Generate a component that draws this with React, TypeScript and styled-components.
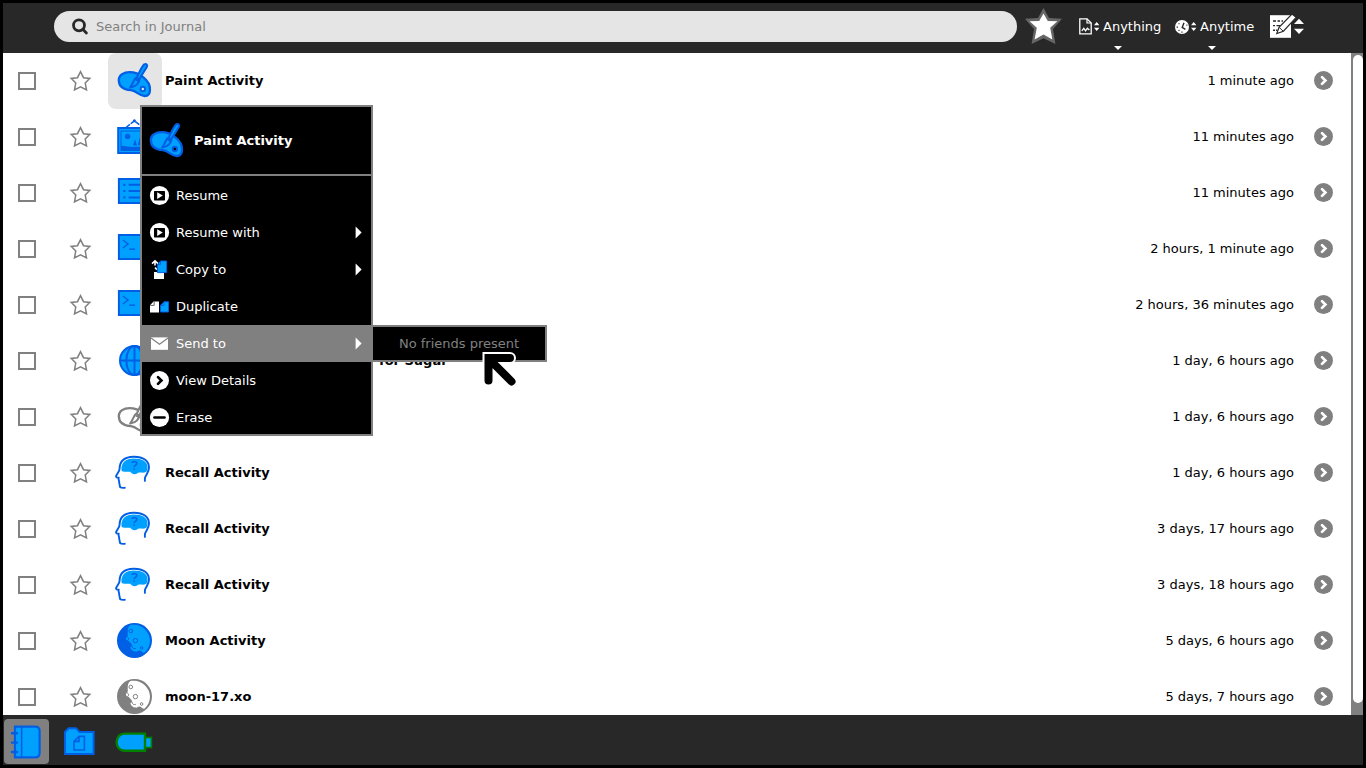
import React from 'react';
import styled, { createGlobalStyle, css } from 'styled-components';

const FILL = '#00a0ff';
const STROKE = '#005fe4';
const GREY = '#808080';

const Global = createGlobalStyle`
  * { box-sizing: border-box; }
  body { margin: 0; background: #000; overflow: hidden; }
  body, button, input { font-family: "DejaVu Sans", Verdana, sans-serif; font-size: 13px; line-height: 16px; }
  button { margin: 0; padding: 0; border: 0; background: none; color: inherit; cursor: pointer; }
  svg { display: block; flex: none; overflow: visible; }
`;

const Screen = styled.div`
  position: relative;
  display: flex;
  flex-direction: column;
  height: 100vh;
  border: 3px solid #000;
`;

/* ---------- top toolbar ---------- */

const Toolbar = styled.header`
  display: flex;
  align-items: center;
  flex: none;
  height: 50px;
  padding: 0 59px 3px 51px;
  background: #282828;
  color: #fff;
`;

const SearchField = styled.label`
  display: flex;
  align-items: center;
  flex: 1;
  min-width: 0;
  height: 31px;
  padding: 0 18px;
  gap: 8px;
  border-radius: 16px;
  background: #e5e5e5;
`;

const SearchInput = styled.input`
  flex: 1;
  min-width: 0;
  padding: 0;
  border: 0;
  outline: 0;
  background: none;
  color: #000;
  &::placeholder { color: ${GREY}; opacity: 1; }
`;

const FavouriteFilter = styled.button`
  margin: 0 17px 0 8px;
`;

const FilterButton = styled.button<{ $width: number }>`
  position: relative;
  display: flex;
  align-items: center;
  width: ${p => p.$width}px;
  height: 47px;
  margin-right: 16px;
  gap: 2px;
  white-space: nowrap;
  &::after {
    content: '';
    position: absolute;
    left: 50%;
    bottom: 0;
    margin-left: -5px;
    border: 4px solid transparent;
    border-top-color: #fff;
    border-bottom: 0;
  }
`;

const FilterText = styled.span`
  padding-left: 1px;
`;

const SortButton = styled.button`
  margin-left: 3px;
`;

/* ---------- journal list ---------- */

const Journal = styled.main`
  display: flex;
  flex: 1;
  min-height: 0;
  background: #fff;
`;

const Entries = styled.ul`
  flex: 1;
  min-width: 0;
  margin: 0;
  padding: 0;
  list-style: none;
  overflow: hidden;
`;

const Entry = styled.li`
  display: flex;
  align-items: center;
  height: 56px;
  padding: 0 17px 0 15px;
`;

const Tick = styled.input`
  appearance: none;
  flex: none;
  width: 18px;
  height: 18px;
  margin: 0 33px 0 0;
  border: 2px solid ${GREY};
  background: #fff;
  &:checked { background: ${GREY}; }
`;

const ActivityButton = styled.button<{ $active: boolean }>`
  display: flex;
  align-items: center;
  flex: none;
  width: 54px;
  height: 56px;
  margin: 0 3px 0 17px;
  padding-left: 9px;
  border-radius: 8px;
  background: ${p => (p.$active ? '#e5e5e5' : 'none')};
`;

const Title = styled.span`
  flex: 1;
  min-width: 0;
  font-weight: 700;
  white-space: nowrap;
`;

const When = styled.time`
  margin-right: 20px;
  white-space: nowrap;
`;

const Scrollbar = styled.div`
  flex: none;
  width: 12px;
  padding: 2px 0 12px 2px;
  background: ${GREY};
`;

const Thumb = styled.div`
  height: 100%;
  border-radius: 5px;
  background: #fff;
`;

/* ---------- bottom volumes bar ---------- */

const VolumesBar = styled.footer`
  display: flex;
  align-items: center;
  flex: none;
  height: 50px;
  padding: 3px 1px 0;
  gap: 8px;
  background: #282828;
`;

const VolumeButton = styled.button<{ $active?: boolean }>`
  display: flex;
  align-items: center;
  justify-content: center;
  width: 45px;
  height: 45px;
  border-radius: 4px;
  ${p => p.$active && css`background: ${GREY};`}
`;

/* ---------- palette menu ---------- */

const Palette = styled.div`
  position: absolute;
  left: 137px;
  top: 102px;
  width: 233px;
  border: 2px solid ${GREY};
  background: #000;
  color: #fff;
`;

const PaletteHeader = styled.div`
  display: flex;
  align-items: center;
  height: 69px;
  padding-left: 7px;
  gap: 9px;
  border-bottom: 2px solid ${GREY};
  font-weight: 700;
`;

const PaletteItems = styled.ul`
  margin: 0 0 -2px;
  padding: 1px 0 0;
  list-style: none;
`;

const PaletteRow = styled.li`
  position: relative;
`;

const PaletteItem = styled.button<{ $active?: boolean }>`
  display: flex;
  align-items: center;
  width: 100%;
  height: 37px;
  padding: 0 9px 0 8px;
  gap: 6px;
  text-align: left;
  background: ${p => (p.$active ? GREY : 'none')};
`;

const ItemText = styled.span`
  flex: 1;
`;

const SubPalette = styled.div`
  position: absolute;
  left: 100%;
  top: 0;
  width: 176px;
  border: 2px solid ${GREY};
  background: #000;
  color: ${GREY};
  line-height: 33px;
  text-align: center;
  white-space: nowrap;
`;

const Pointer = styled.svg`
  position: absolute;
  left: 479px;
  top: 348px;
  pointer-events: none;
`;

/* ---------- drawings ---------- */

type Tint = { fill?: string; stroke?: string; hole?: string };

const StarOutline = () => (
  <svg width="22" height="22" viewBox="0 0 22 22">
    <path d="M11.5 1.6 L14.5 7.7 L20.8 8.4 L16.2 12.9 L17.5 19.9 L11.5 16.8 L5.5 19.9 L6.8 12.9 L2.2 8.4 L8.5 7.7 Z" fill="#fff" stroke={GREY} strokeWidth="1.5" />
  </svg>
);

const BigStar = () => (
  <svg width="37" height="37" viewBox="0 0 37 37">
    <path d="M18.5 0 L24 10 L37 10.8 L28 21 L30.4 36 L18.5 30.2 L6.6 36 L9 21 L0 10.8 L13 10 Z" fill="#666" />
    <path d="M18.5 5.4 L22.8 13 L32.4 13.2 L25.2 19.8 L27.4 31.6 L18.5 26.4 L9.6 31.6 L11.8 19.8 L4.6 13.2 L14.2 13 Z" fill="#fff" />
  </svg>
);

const Magnifier = () => (
  <svg width="16" height="17" viewBox="0 0 16 17">
    <circle cx="7" cy="7.3" r="5.5" fill="none" stroke="#282828" strokeWidth="2.8" />
    <path d="M10.8 11.3 L14.4 15" stroke="#282828" strokeWidth="2.8" strokeLinecap="round" />
  </svg>
);

const UpDown = () => (
  <svg width="6" height="9" viewBox="0 0 6 9">
    <path d="M0 3.2 L2.7 0 L5.4 3.2 Z M0 5.8 L2.7 9 L5.4 5.8 Z" fill="#fff" />
  </svg>
);

const DocIcon = () => (
  <svg width="13" height="17" viewBox="0 0 13 17">
    <path d="M0.8 0.8 H8 L12.2 5 V15.8 H0.8 Z" fill="none" stroke="#fff" strokeWidth="1.3" />
    <path d="M8 0.8 V5 H12.2" fill="none" stroke="#fff" strokeWidth="1.2" />
    <path d="M2.8 12.8 L4.8 10.4 L6.6 12.8 L8.4 10.2 L10.4 12" fill="none" stroke="#fff" strokeWidth="1.3" />
  </svg>
);

const ClockIcon = () => (
  <svg width="14" height="14" viewBox="0 0 14 14">
    <circle cx="7" cy="7" r="7" fill="#fff" />
    <g stroke="#282828" fill="none" strokeWidth="1.4">
      <path d="M9 2.8 L7.2 7.4 L10.4 9.4" />
      <path d="M1.6 7.2 H3 M3.6 3.4 L4.4 4.2 M3.6 10.8 L4.4 10 M7 11.6 V12.8 M11.4 5.2 H12.4" strokeWidth="1.2" />
    </g>
  </svg>
);

const EditSort = () => (
  <svg width="34" height="25" viewBox="0 0 34 25">
    <rect x="0" y="1.2" width="21" height="22.6" fill="#fff" />
    <path d="M3 7 H6 M7.5 7 H10 M11.5 7 H13 M3 11.6 H5 M6.5 11.6 H10 M3 16.2 H5 M6 16.2 H7.4" stroke="#282828" strokeWidth="1.4" />
    <path d="M22 0 L26.2 3.4 L13.4 17.2 L6.8 19.6 L9 13.4 Z" fill="#fff" stroke="#282828" strokeWidth="1.2" />
    <path d="M9.4 13.6 L13 17" stroke="#282828" strokeWidth="1" />
    <path d="M24 10 L29 4.8 L34 10 Z M24 14.8 L29 20 L34 14.8 Z" fill="#fff" />
  </svg>
);

const PaintIcon = ({ fill = FILL, stroke = STROKE, hole = '#fff' }: Tint) => (
  <svg width="36" height="36" viewBox="0 0 36 36">
    <path d="M1.8 17 C1.8 11.8 7 9.2 12.5 9.2 C22 9.2 33.2 17 33 26.5 C33 31 30.8 33 27.6 33 C22.5 33 20 28 14 27.2 C6 26.6 1.8 23 1.8 17 Z" fill={fill} stroke={stroke} strokeWidth="2.3" />
    <circle cx="25.8" cy="26" r="2.2" fill={hole} stroke={stroke} strokeWidth="2" />
    <path d="M22.8 15.2 L29.8 4 C30.8 1.6 29.2 0.4 27.2 1.4 C25 3 21.6 11 20 14.2 C17 15.4 16.2 20.6 13.2 24.4 C17.4 24 22 21.6 22.8 15.2 Z" fill={fill} stroke={stroke} strokeWidth="2.1" strokeLinejoin="round" />
    <path d="M20.2 14.2 L22.8 15.4 L21.6 19 L18.6 17.4 Z" fill={stroke} />
  </svg>
);

const PictureIcon = () => (
  <svg width="36" height="36" viewBox="0 0 36 36">
    <path d="M9 8.5 L17.4 1.8 L25.8 8.5" fill="none" stroke={STROKE} strokeWidth="1.5" strokeDasharray="5 1" />
    <circle cx="17.4" cy="1.8" r="1.5" fill={STROKE} />
    <rect x="1.2" y="9" width="33" height="25" fill={FILL} stroke={STROKE} strokeWidth="2" />
    <rect x="4" y="12" width="27.4" height="19.4" fill={FILL} stroke={STROKE} strokeWidth="1" />
    <circle cx="10.6" cy="17.4" r="2.7" fill={STROKE} />
    <path d="M4 26.5 C12 28.5 22 28.5 31.4 26 V31.4 H4 Z M18 20 L20 26.4 H16 Z M23 18 L25.4 26 H20.8 Z" fill={STROKE} />
  </svg>
);

const ListIcon = () => (
  <svg width="36" height="36" viewBox="0 0 36 36">
    <rect x="1.9" y="4" width="32" height="24" fill={FILL} stroke={STROKE} strokeWidth="2" />
    <path d="M11.6 9.8 H29 M11.6 16 H29 M11.6 22.4 H29" stroke={STROKE} strokeWidth="2" />
    <path d="M6.2 9.8 H8.4 M6.2 16 H8.4 M6.2 22.4 H8.4" stroke={STROKE} strokeWidth="2.2" />
  </svg>
);

const TerminalIcon = () => (
  <svg width="36" height="36" viewBox="0 0 36 36">
    <rect x="1.9" y="4" width="32" height="24" fill={FILL} stroke={STROKE} strokeWidth="2" />
    <path d="M6 9 L11 13 L6 17" fill="none" stroke={STROKE} strokeWidth="1.5" />
    <path d="M12.2 18.2 H18" stroke={STROKE} strokeWidth="1.5" />
  </svg>
);

const GlobeIcon = () => (
  <svg width="36" height="36" viewBox="0 0 36 36">
    <g fill="none" stroke={STROKE} strokeWidth="2">
      <circle cx="17.5" cy="17.5" r="14.5" fill={FILL} />
      <ellipse cx="17.5" cy="17.5" rx="8.2" ry="14.5" />
      <path d="M17.5 3 V32 M3 17.5 H32" />
    </g>
  </svg>
);

const HeadIcon = () => (
  <svg width="36" height="36" viewBox="0 0 36 36">
    <path d="M4.4 13 C5 6 10 3.4 17 3.4 C25 3.4 31 6.4 30.6 13 C30.4 16 29.4 17 27.6 17.6 C25 18 22 17 20.4 18.2 C18.4 20 14.6 19.4 13.4 16.8 C10.6 16.8 7 17 4.6 16 Z" fill={FILL} />
    <path d="M8.6 32.6 C5.6 33 3 32.8 2.8 31.4 C3.2 29.6 1.8 28.8 2.2 26.8 C1.8 25.4 1.4 24.4 1.6 22.8 C-0.2 22.6 -1.4 22 -0.8 20.6 C0.6 17.8 2.6 16.2 2.6 13.8 C2.6 8 5 2.2 16.6 1.8 C26.2 1.6 32 5.8 32 12.8 C32 17 29 19.6 28 22.6 C27.8 24.4 27.8 25.4 28 26.6" fill="none" stroke={STROKE} strokeWidth="1.9" />
    <path d="M15 8 C15.6 6.2 20 6 19.8 8.4 C19.6 10.2 17.4 10 17.2 12.2 M17.1 13.6 V15" fill="none" stroke={STROKE} strokeWidth="1.5" />
  </svg>
);

const MoonIcon = ({ fill = FILL, stroke = STROKE }: Tint) => (
  <svg width="36" height="36" viewBox="0 0 36 36">
    <circle cx="17.5" cy="17.5" r="17.5" fill={stroke} />
    <path d="M13 2.2 C23 -0.4 33 8 33 17.5 C33 22.4 31 26.6 27.6 29.4 C25.4 30.4 25 28 22.6 27.6 C20.6 27.2 20.6 29.2 18.6 28.6 C15.6 28.4 13.6 26.4 13.4 24 C15 24 15.4 22.4 14.4 20.8 C12.6 19.4 12.8 18 10.6 17.4 C8.4 17 8.6 13.6 10.6 13.2 C11.4 10.6 9.4 5.4 13 2.2 Z" fill={fill} />
    <g fill="none" stroke={stroke} strokeWidth="1">
      <circle cx="13.8" cy="8" r="1.8" />
      <circle cx="18.4" cy="17.6" r="2.2" />
      <circle cx="24.6" cy="25" r="1.3" />
      <path d="M9.6 14 C12 14 12.4 17 10.4 17.4 M15.2 22.8 C15 25.6 17.4 26.2 19 25.2" />
    </g>
  </svg>
);

const GoIcon = ({ bg = GREY, fg = '#fff' }: { bg?: string; fg?: string }) => (
  <svg width="20" height="20" viewBox="0 0 20 20">
    <circle cx="9.5" cy="9.5" r="9.5" fill={bg} />
    <path d="M8 6.1 L11.4 9.5 L8 12.9" fill="none" stroke={fg} strokeWidth="2.7" strokeLinecap="round" />
  </svg>
);

const ResumeIcon = () => (
  <svg width="20" height="20" viewBox="0 0 20 20">
    <circle cx="9.5" cy="9.5" r="9.6" fill="#fff" />
    <rect x="4" y="5" width="11" height="9.4" rx="0.6" fill="#000" />
    <path d="M7.2 6.2 L12.8 9.6 L7.2 13 Z" fill="#fff" />
  </svg>
);

const CopyIcon = () => (
  <svg width="20" height="20" viewBox="0 0 20 20">
    <path d="M4 12 H14 V19 H4 Z" fill="#fff" />
    <path d="M2 3.6 L5 0.8 L8 3.6 M5 1.2 V5.6 M5 7.6 L7 9.6" fill="none" stroke="#fff" strokeWidth="1.6" />
    <path d="M10.6 1 H16.6 V12.6 H7.4 V4.6 Z" fill={FILL} stroke={STROKE} strokeWidth="1" />
    <path d="M10.6 1 V4.6 H7.4" fill="none" stroke={STROKE} strokeWidth="1" />
  </svg>
);

const DuplicateIcon = () => (
  <svg width="20" height="20" viewBox="0 0 20 20">
    <path d="M3.6 4.4 H9 V15.4 H0 V8.2 Z" fill="#fff" />
    <path d="M4.2 4.4 V8.4 H0.4" fill="none" stroke="#666" strokeWidth="1" />
    <path d="M14 4.8 H18.5 V15 H10.5 V8.4 Z" fill={FILL} stroke={STROKE} strokeWidth="1" />
    <path d="M14 4.8 V8.4 H10.5" fill="none" stroke={STROKE} strokeWidth="1" />
  </svg>
);

const MailIcon = () => (
  <svg width="20" height="20" viewBox="0 0 20 20">
    <rect x="1" y="3.4" width="17" height="12.4" fill="#fff" />
    <path d="M1 4 L9.5 10.2 L18 4" fill="none" stroke={GREY} strokeWidth="1.2" />
  </svg>
);

const EraseIcon = () => (
  <svg width="20" height="20" viewBox="0 0 20 20">
    <circle cx="9.5" cy="9.5" r="9.6" fill="#fff" />
    <path d="M4.4 9.5 H14.6" stroke="#000" strokeWidth="2.4" strokeLinecap="round" />
  </svg>
);

const SubmenuArrow = () => (
  <svg width="7" height="14" viewBox="0 0 7 14">
    <path d="M0.6 0.4 L6.6 6.4 L0.6 12.4 Z" fill="#fff" />
  </svg>
);

const JournalIcon = () => (
  <svg width="33" height="34" viewBox="0 0 33 34">
    <path d="M5 1.6 H25 Q29.6 1.6 29.6 6 V28 Q29.6 32.4 25 32.4 H5 Z" fill={FILL} stroke={STROKE} strokeWidth="2.2" />
    <path d="M11.6 1.6 V32.4" stroke={STROKE} strokeWidth="1.6" />
    <path d="M2 8.2 H7 M2 17.6 H7 M2 27 H7" stroke={STROKE} strokeWidth="2.4" strokeLinecap="round" />
  </svg>
);

const FolderIcon = () => (
  <svg width="31" height="29" viewBox="0 0 31 29">
    <path d="M1 27 V5 L4.6 1.2 H12 L15.4 5 H29.6 V27 Z" fill={FILL} stroke={STROKE} strokeWidth="2" />
    <path d="M15 9.4 H20.4 V23 H10 V14.4 Z M15 9.4 V14.4 H10" fill="none" stroke={STROKE} strokeWidth="1.6" />
  </svg>
);

const DriveIcon = () => (
  <svg width="38" height="21" viewBox="-1 -1 38 21">
    <rect x="30" y="5.5" width="6.4" height="10" fill={FILL} stroke="#008000" strokeWidth="1.6" />
    <path d="M30 1.6 V18.8 H10 C4.6 18.8 1.6 15 1.6 10.2 C1.6 5.4 4.6 1.6 10 1.6 Z" fill={FILL} stroke="#008000" strokeWidth="2.4" />
  </svg>
);

/* ---------- data ---------- */

const entries: { title: string; when: string; icon: React.ReactNode; active?: boolean }[] = [
  { title: 'Paint Activity', when: '1 minute ago', icon: <PaintIcon hole="#e5e5e5" />, active: true },
  { title: '', when: '11 minutes ago', icon: <PictureIcon /> },
  { title: '', when: '11 minutes ago', icon: <ListIcon /> },
  { title: '', when: '2 hours, 1 minute ago', icon: <TerminalIcon /> },
  { title: '', when: '2 hours, 36 minutes ago', icon: <TerminalIcon /> },
  { title: 'Browse Activity Library list – for Sugar', when: '1 day, 6 hours ago', icon: <GlobeIcon /> },
  { title: '', when: '1 day, 6 hours ago', icon: <PaintIcon fill="#fff" stroke={GREY} /> },
  { title: 'Recall Activity', when: '1 day, 6 hours ago', icon: <HeadIcon /> },
  { title: 'Recall Activity', when: '3 days, 17 hours ago', icon: <HeadIcon /> },
  { title: 'Recall Activity', when: '3 days, 18 hours ago', icon: <HeadIcon /> },
  { title: 'Moon Activity', when: '5 days, 6 hours ago', icon: <MoonIcon /> },
  { title: 'moon-17.xo', when: '5 days, 7 hours ago', icon: <MoonIcon fill="#fff" stroke={GREY} /> },
];

const actions: { label: string; icon: React.ReactNode; more?: boolean; active?: boolean }[] = [
  { label: 'Resume', icon: <ResumeIcon /> },
  { label: 'Resume with', icon: <ResumeIcon />, more: true },
  { label: 'Copy to', icon: <CopyIcon />, more: true },
  { label: 'Duplicate', icon: <DuplicateIcon /> },
  { label: 'Send to', icon: <MailIcon />, more: true, active: true },
  { label: 'View Details', icon: <GoIcon bg="#fff" fg="#000" /> },
  { label: 'Erase', icon: <EraseIcon /> },
];

export default function App() {
  return (
    <>
      <Global />
      <Screen>
        <Toolbar>
          <SearchField>
            <Magnifier />
            <SearchInput type="text" placeholder="Search in Journal" aria-label="Search in Journal" />
          </SearchField>
          <FavouriteFilter aria-label="Favorite entries"><BigStar /></FavouriteFilter>
          <FilterButton $width={80}>
            <DocIcon /><UpDown /><FilterText>Anything</FilterText>
          </FilterButton>
          <FilterButton $width={76}>
            <ClockIcon /><UpDown /><FilterText>Anytime</FilterText>
          </FilterButton>
          <SortButton aria-label="Sort view"><EditSort /></SortButton>
        </Toolbar>

        <Journal>
          <Entries>
            {entries.map((e, i) => (
              <Entry key={i}>
                <Tick type="checkbox" aria-label={`Select ${e.title || 'entry'}`} />
                <button aria-label="Favorite"><StarOutline /></button>
                <ActivityButton $active={!!e.active} aria-label="Open entry">{e.icon}</ActivityButton>
                <Title>{e.title}</Title>
                <When>{e.when}</When>
                <button aria-label="Details"><GoIcon /></button>
              </Entry>
            ))}
          </Entries>
          <Scrollbar><Thumb /></Scrollbar>
        </Journal>

        <VolumesBar>
          <VolumeButton $active aria-label="Journal"><JournalIcon /></VolumeButton>
          <VolumeButton aria-label="Documents"><FolderIcon /></VolumeButton>
          <VolumeButton aria-label="Removable drive"><DriveIcon /></VolumeButton>
        </VolumesBar>

        <Palette>
          <PaletteHeader><PaintIcon hole="#000" />Paint Activity</PaletteHeader>
          <PaletteItems>
            {actions.map(a => (
              <PaletteRow key={a.label}>
                <PaletteItem $active={a.active}>
                  {a.icon}
                  <ItemText>{a.label}</ItemText>
                  {a.more && <SubmenuArrow />}
                </PaletteItem>
                {a.active && <SubPalette>No friends present</SubPalette>}
              </PaletteRow>
            ))}
          </PaletteItems>
        </Palette>

        <Pointer width="36" height="38" viewBox="0 0 36 38" aria-hidden="true">
          <g fill="none" strokeLinecap="round">
            <path d="M28 7 H6.5 V29.5 M8 9 L29.5 30.5" stroke="#fff" strokeWidth="12" />
            <path d="M28 7 H6.5 V29.5 M8 9 L29.5 30.5" stroke="#000" strokeWidth="8" />
          </g>
        </Pointer>
      </Screen>
    </>
  );
}
